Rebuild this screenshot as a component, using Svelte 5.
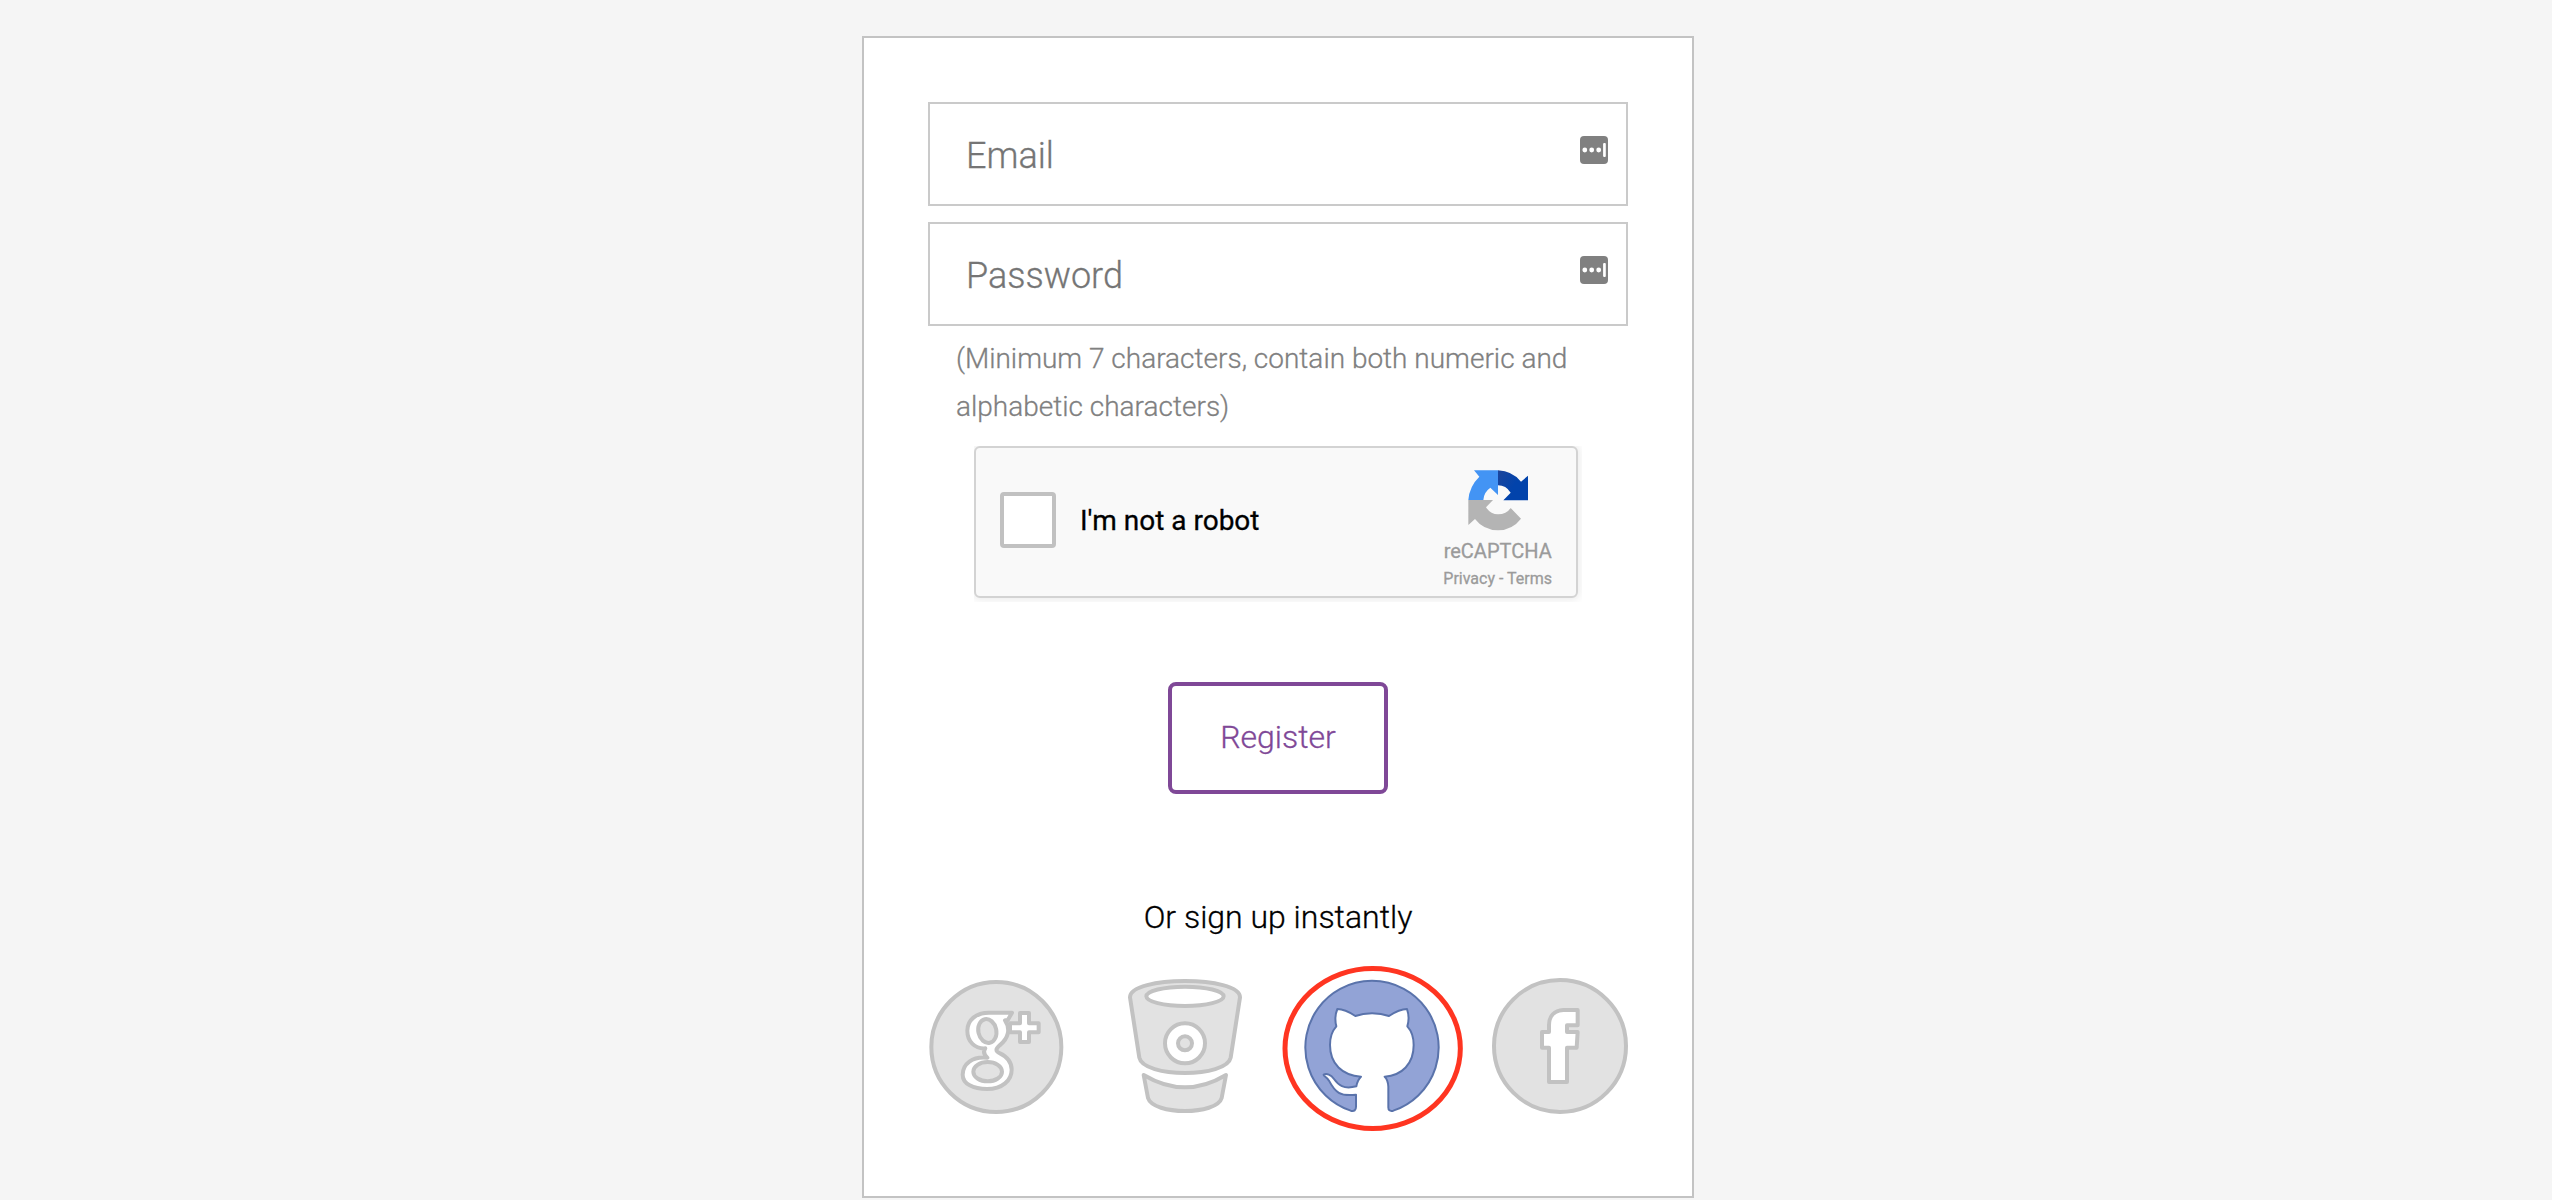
<script>
  const fields = [
    { type: 'email', label: 'Email' },
    { type: 'password', label: 'Password' }
  ];
</script>

<main class="page">
  <form class="card">
    <div class="fields">
      {#each fields as field}
        <label class="field">
          <input type={field.type} placeholder={field.label} />
          <svg class="fill-icon" viewBox="0 0 28 28">
            <rect width="28" height="28" rx="4" fill="#808080" />
            <g fill="#fff">
              <circle cx="4.8" cy="14" r="2.4" />
              <circle cx="11.7" cy="14" r="2.4" />
              <circle cx="18.7" cy="14" r="2.4" />
              <rect x="23.1" y="7" width="2.7" height="14" rx="1" />
            </g>
          </svg>
        </label>
      {/each}
    </div>

    <p class="hint">(Minimum 7 characters, contain both numeric and alphabetic characters)</p>

    <div class="captcha">
      <span class="box"></span>
      <span class="robot">I'm not a robot</span>
      <div class="brand">
        <svg class="arrows" viewBox="504 420 182 182">
          <defs>
            <linearGradient id="navy" x1="0" x2="0.6" y1="0" y2="0.4">
              <stop offset="0" stop-color="#1c459b" />
              <stop offset="1" stop-color="#0243ab" />
            </linearGradient>
          </defs>
          <path fill="#4394f4" d="M522 421H594V495L571 473Q551 487 550 510H505Q508 469 538 440Z" />
          <path fill="url(#navy)" d="M594 421Q637 423 663 455L684 437V511H610L632 488Q618 466 594 466Z" />
          <path fill="#b4b4b4" d="M505 510H579L558 532Q572 553 594 553Q619 553 632 534L663 566Q637 600 594 601Q550 600 525 567L505 585Z" />
        </svg>
        <span class="name">reCAPTCHA</span>
        <span class="legal">Privacy - Terms</span>
      </div>
    </div>

    <button class="register" type="button">Register</button>

    <p class="or">Or sign up instantly</p>

    <div class="social">
      <svg class="muted" viewBox="39 54 408 408" aria-label="Google Plus">
        <circle cx="244" cy="261" r="195" />
        <path class="hole" d="M291 158H222C184 158 157 180 157 212C157 245 180 267 211 265C203 276 208 285 217 293C172 288 143 312 143 344C143 372 175 387 216 387C262 387 290 361 290 329C290 303 276 290 255 280C240 273 242 267 254 256C281 234 287 206 270 181H278Z" />
        <ellipse cx="217" cy="213" rx="27" ry="36" transform="rotate(-12 217 213)" />
        <ellipse cx="218" cy="335" rx="43" ry="29" />
        <path class="hole" d="M315 159H342V190H371V217H342V246H315V217H285V190H315Z" />
      </svg>

      <svg class="muted" viewBox="18 54 408 408" aria-label="Bitbucket">
        <path d="M60 112C60 47 390 47 390 112L362 293C350 354 100 354 88 293Z" />
        <ellipse class="hole" cx="225" cy="109" rx="116" ry="29" />
        <circle class="hole" cx="225" cy="250" r="60" />
        <circle cx="225" cy="250" r="21" />
        <path d="M101 345Q225 419 348 345L335 414C320 466 130 466 114 414Z" />
      </svg>

      <svg class="github" viewBox="102 84 408 408" aria-label="GitHub">
        <path
          class="cat"
          d="M258 434V470Q258 486 242 482A200 200 0 1 1 370 482Q354 486 355 470V410Q354 389 344 380C396 376 431 342 431 285C431 259 423 241 412 229C417 213 416 192 411 177C395 177 375 186 357 198C326 187 286 187 256 198C235 184 216 177 202 177C195 194 195 213 199 229C188 241 180 259 180 285C180 342 217 376 273 380C264 388 261 398 259 409C220 419 205 405 192 387C183 374 170 369 161 374C159 378 170 380 177 392C195 427 211 440 258 434Z"
        />
        <ellipse class="ring" cx="308" cy="295.5" rx="263" ry="240" />
      </svg>

      <svg class="muted" viewBox="36 54 408 408" aria-label="Facebook">
        <circle cx="240" cy="258" r="198" />
        <path class="hole" d="M293 150H250C223 152 207 169 207 195V216H186V263H207V366H261V263H290L293 216H261V196H293Z" />
      </svg>
    </div>
  </form>
</main>

<style>
  :global(body) {
    margin: 0;
    background: #f5f5f5;
  }
  .page {
    box-sizing: border-box;
    height: 1200px;
    padding: 36px 0 2px 4px;
    display: flex;
    justify-content: center;
    font-family: Roboto, 'Liberation Sans', sans-serif;
    font-weight: 300;
    -webkit-text-stroke: 0.3px currentColor;
  }
  .card {
    box-sizing: border-box;
    width: 832px;
    padding: 64px;
    display: flex;
    flex-direction: column;
    align-items: center;
    border: 2px solid #c3c3c3;
    background: #fff;
  }
  .fields {
    display: flex;
    flex-direction: column;
    gap: 16px;
    width: 700px;
  }
  .field {
    box-sizing: border-box;
    height: 104px;
    padding: 0 18px 0 36px;
    display: flex;
    align-items: center;
    border: 2px solid #cacaca;
  }
  input {
    flex: 1;
    min-width: 0;
    height: 60px;
    padding: 3px 0 0;
    border: 0;
    outline: 0;
    background: none;
    font: inherit;
    font-size: 36px;
  }
  input::placeholder {
    color: #757575;
    opacity: 1;
  }
  .fill-icon {
    width: 28px;
    height: 28px;
    margin-bottom: 8px;
  }
  .hint {
    box-sizing: border-box;
    width: 700px;
    margin: 9px 0 15px;
    padding: 0 28px;
    font-size: 28px;
    line-height: 48px;
    color: #808080;
  }
  .captcha {
    box-sizing: border-box;
    width: 604px;
    height: 152px;
    margin-right: 4px;
    padding: 0 24px;
    display: flex;
    align-items: center;
    border: 2px solid #d3d3d3;
    border-radius: 6px;
    background: #f9f9f9;
    box-shadow: 0 0 8px 2px rgba(0, 0, 0, 0.08);
    clip-path: inset(0 -4px -4px 0);
    font-weight: 400;
  }
  .box {
    box-sizing: border-box;
    width: 56px;
    height: 56px;
    margin-bottom: 4px;
    border: 4px solid #c1c1c1;
    border-radius: 4px;
    background: #fff;
  }
  .robot {
    margin: 0 auto 4px 24px;
    font-size: 28px;
    color: #000;
  }
  .brand {
    height: 148px;
    display: flex;
    flex-direction: column;
    align-items: center;
    color: #9b9b9b;
  }
  .arrows {
    width: 60.7px;
    height: 60.7px;
    margin: 22px 0 8px 1px;
  }
  .name {
    font-size: 20px;
    line-height: 24px;
  }
  .legal {
    margin-top: 6px;
    font-size: 16px;
    line-height: 20px;
  }
  .register {
    box-sizing: border-box;
    width: 220px;
    height: 112px;
    margin-top: 84px;
    padding: 0 0 3px;
    border: 4px solid #7f4897;
    border-radius: 8px;
    background: #fff;
    font: inherit;
    font-size: 32px;
    color: #7f4897;
  }
  .or {
    margin: 99px 0 37px;
    font-size: 32px;
    line-height: 48px;
    color: #000;
  }
  .social {
    display: flex;
    justify-content: space-between;
    width: 700px;
  }
  .social svg {
    width: 136px;
    height: 136px;
    overflow: visible;
  }
  .muted {
    fill: #e2e2e2;
    stroke: #c2c2c2;
    stroke-width: 12;
    stroke-linejoin: round;
  }
  .hole {
    fill: #fff;
  }
  .cat {
    fill: #92a3d6;
    stroke: #5a73ab;
    stroke-width: 6;
    stroke-linejoin: round;
  }
  .ring {
    fill: none;
    stroke: #ff3521;
    stroke-width: 15;
  }
</style>
